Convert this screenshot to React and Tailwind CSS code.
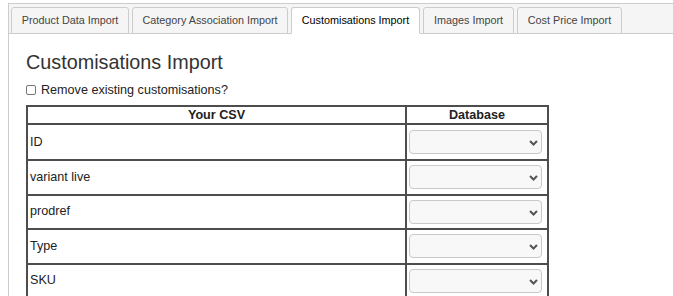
import React from 'react';

const tabs = [
  { label: 'Product Data Import', width: 'w-[118px]' },
  { label: 'Category Association Import', width: 'w-[156px]' },
  { label: 'Customisations Import', width: 'w-[129px]', active: true },
  { label: 'Images Import', width: 'w-[91px]' },
  { label: 'Cost Price Import', width: 'w-[105px]' },
];

const csvColumns = ['ID', 'variant live', 'prodref', 'Type', 'SKU'];

const Chevron = () => (
  <svg
    className="pointer-events-none absolute right-[4px] top-[10px]"
    width="9"
    height="6"
    viewBox="0 0 9 6"
  >
    <path d="M1 1l3.5 3.5L8 1" fill="none" stroke="#555" strokeWidth="2" />
  </svg>
);

const FieldSelect = () => (
  <div className="relative ml-[2px] h-[24px] w-[133px]">
    <select className="h-full w-full appearance-none rounded-[4px] border border-[#c9c9c9] bg-[#f8f8f8] outline-none">
      <option value=""></option>
    </select>
    <Chevron />
  </div>
);

const App = () => {
  return (
    <div className="min-h-[296px] bg-white pl-[8px] pt-[3px] font-['Liberation_Sans',Arial,sans-serif] text-[#333]">
      <div className="border-l border-t border-[#ccc]">
        {/* tab bar */}
        <div className="flex gap-[3px] border-b border-[#ccc] bg-[#f5f5f5] pl-[2px] pt-[3px]">
          {tabs.map((tab) => (
            <div
              key={tab.label}
              className={`${tab.width} -mb-px flex h-[27px] items-center justify-center rounded-t-[3px] border border-[#ccc] text-[10.8px] ${
                tab.active
                  ? 'border-b-white bg-white text-black'
                  : 'border-b-[#ccc] bg-[#f5f5f5] text-[#444]'
              }`}
            >
              {tab.label}
            </div>
          ))}
        </div>

        {/* panel */}
        <div className="pl-[17px] pt-[16px]">
          <h1 className="text-[19.8px] leading-[24px] text-[#333]">Customisations Import</h1>

          <label className="mt-[8px] flex h-[16px] items-center text-[12.6px] leading-[16px] text-[#222]">
            <span className="mr-[5px] inline-block h-[10px] w-[10px] rounded-[2px] border border-[#777] bg-white" />
            Remove existing customisations?
          </label>

          <div className="mt-[7px] w-[523px] border-2 border-b-0 border-[#4d4d4d] text-[12.6px] text-[#222]">
            <div className="grid grid-cols-[379px_140px] border-b-2 border-[#4d4d4d] font-bold">
              <div className="flex h-[16px] items-center justify-center border-r-2 border-[#4d4d4d]">Your CSV</div>
              <div className="flex h-[16px] items-center justify-center">Database</div>
            </div>
            {csvColumns.map((col, i) => (
              <div key={col} className="grid grid-cols-[379px_140px] border-b-2 border-[#4d4d4d]">
                <div
                  className={`flex items-center border-r-2 border-[#4d4d4d] pl-[2px] ${
                    i === 0 ? 'h-[34px]' : 'h-[32.5px]'
                  }`}
                >
                  {col}
                </div>
                <div className="flex items-center">
                  <FieldSelect />
                </div>
              </div>
            ))}
          </div>
        </div>
      </div>
    </div>
  );
};

export default App;
